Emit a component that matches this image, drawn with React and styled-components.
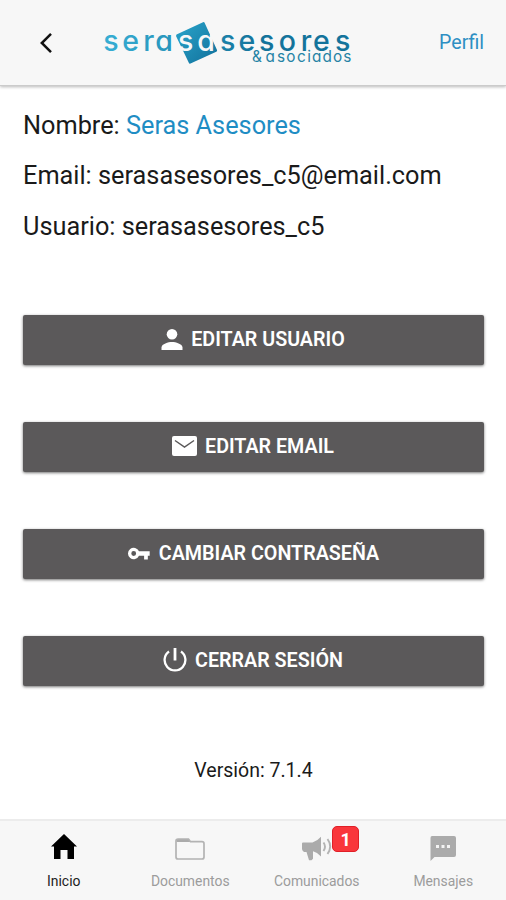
// External modules
import React from 'react';
import styled, { createGlobalStyle } from 'styled-components';

const GlobalStyle = createGlobalStyle`
  * {
    box-sizing: border-box;
  }

  body {
    margin: 0;
    font-family: Roboto, sans-serif;
    background-color: #fff;
    color: #1a1a1a;
  }
`;

const Screen = styled.div`
  width: 100%;
  height: 100vh;
  display: flex;
  flex-direction: column;
  overflow: hidden;
`;

const Header = styled.header`
  height: 86px;
  flex-shrink: 0;
  display: flex;
  align-items: flex-start;
  padding: 0 22px 0 36px;
  background-color: #f7f7f7;
  border-bottom: 1px solid #cbcbcb;
  box-shadow: 0 1px 3px rgba(0, 0, 0, 0.28);
`;

const BackButton = styled.button`
  width: 20px;
  height: 85px;
  padding: 3px 0 0;
  border: none;
  background: transparent;
`;

const Logo = styled.svg`
  width: 260px;
  height: 60px;
  margin: 14px auto 0 42px;
`;

const LogoText = styled.text`
  font-family: Inter, sans-serif;
  font-size: ${(props) => props.$size}px;
  font-weight: ${(props) => props.$weight || 400};
  font-feature-settings: 'cv11';
`;

const HeaderLink = styled.a`
  font-size: 19.6px;
  line-height: 85px;
  color: #2e8fc3;
`;

const Content = styled.main`
  flex: 1;
  padding: 15px 22px 0 23px;
`;

const Info = styled.p`
  margin: 0;
  height: 50.3px;
  line-height: 50px;
  font-size: 25.3px;
`;

const Name = styled.span`
  color: #1f8dc4;
`;

const Actions = styled.div`
  display: flex;
  flex-direction: column;
  gap: 57px;
  margin-top: 63px;
`;

const Action = styled.button`
  height: 50px;
  display: flex;
  justify-content: center;
  align-items: center;
  gap: 8px;
  padding: 0 1px 1px 0;
  border: none;
  border-radius: 2px;
  background-color: #5b595a;
  box-shadow: 0 1px 3px rgba(0, 0, 0, 0.55);
  color: #fff;
  font-family: Roboto, sans-serif;
  font-size: 19.7px;
  font-weight: 600;
  line-height: 49px;
`;

const Icon = styled.svg`
  width: ${(props) => props.$width}px;
  height: ${(props) => props.$height}px;
  flex-shrink: 0;
`;

const Version = styled.p`
  margin: 69px 0 0;
  text-align: center;
  font-size: 19.5px;
  line-height: 31px;
`;

const TabBar = styled.nav`
  height: 81px;
  flex-shrink: 0;
  display: grid;
  grid-template-columns: repeat(4, 1fr);
  background-color: #f7f7f7;
  border-top: 2px solid #ececec;
`;

const Tab = styled.a`
  display: flex;
  flex-direction: column;
  align-items: center;
  color: ${(props) => (props.$active ? '#222' : '#9c9c9c')};
  font-size: 13.9px;
`;

const TabIcon = styled.div`
  position: relative;
  width: 32px;
  height: 52px;
  display: flex;
  align-items: center;
  justify-content: center;
  padding: ${(props) => props.$drop || 0}px 0 ${(props) => props.$lift || 0}px 1px;
`;

const TabLabel = styled.span`
  padding-left: 1px;
  line-height: 17px;
`;

const Badge = styled.span`
  position: absolute;
  top: 5px;
  left: 32px;
  width: 27px;
  height: 26px;
  border: 1px solid #e01f27;
  border-radius: 5px;
  background-color: #f9363b;
  color: #fff;
  font-size: 18px;
  font-weight: 700;
  line-height: 25px;
  text-align: center;
`;

const BrandLogo = () => (
  <Logo viewBox="98 14 260 60">
    <defs>
      <linearGradient id="tile" x1="0" y1="0" x2="1" y2="1">
        <stop offset="0" stopColor="#2aa5cb" />
        <stop offset="1" stopColor="#11709b" />
      </linearGradient>
      <linearGradient id="brand" gradientUnits="userSpaceOnUse" x1="104" y1="0" x2="260" y2="0">
        <stop offset="0" stopColor="#37aed4" />
        <stop offset="1" stopColor="#14739b" />
      </linearGradient>
    </defs>
    <path d="M176.5 34.5 203 22.2q1.2-.5 1.700.7L217 50q.5 1.200-.7 1.700L190.500 63.500q-1.200.5-1.700-.7L176 36z" fill="url(#tile)" />
    <LogoText $size={28.5} $weight={500} y="51" x="103.2 122.3 143.2 155.3" fill="url(#brand)">sera</LogoText>
    <LogoText $size={28.5} $weight={500} y="51" x="178 197.3" fill="#f7f7f7">sa</LogoText>
    <LogoText $size={28.5} $weight={500} y="51" x="220 238.5 259 278.7 300.7 313 335" fill="url(#brand)">sesores</LogoText>
    <LogoText $size={15.3} y="62" x="252 265.6 277 286.2 297 307.2 312 322.5 333 343.3" fill="#2583a5">&amp;asociados</LogoText>
  </Logo>
);

const PersonIcon = () => (
  <Icon $width={22} $height={21} viewBox="0 0 22 21" fill="#fff">
    <circle cx="11" cy="5.3" r="5.3" />
    <path d="M.5 21v-2.600C.5 15 7.400 13 11 13s10.500 2 10.500 5.400V21z" />
  </Icon>
);

const MailIcon = () => (
  <Icon $width={25} $height={20} viewBox="0 0 25 20">
    <rect width="25" height="20" rx="2" fill="#fff" />
    <path d="M3 4.500l9.500 6.500L22 4.500" fill="none" stroke="#5b595a" strokeWidth="1.5" />
  </Icon>
);

const KeyIcon = () => (
  <Icon $width={24} $height={13} viewBox="0 0 24 14" fill="#fff">
    <path
      fillRule="evenodd"
      d="M12 4.500A6.200 6.200 0 1 0 12 9.500h5.500V13.500h4V9.500H23.500v-5zM6.300 4.400a2.600 2.600 0 1 1 0 5.200 2.600 2.600 0 0 1 0-5.200z"
    />
  </Icon>
);

const PowerIcon = () => (
  <Icon $width={24} $height={24} viewBox="0 0 24 24" fill="none" stroke="#fff" strokeWidth="2.3">
    <path d="M6 3.500a10.400 10.400 0 1 0 12 0" />
    <path d="M12 0v12.500" strokeWidth="2.8" />
  </Icon>
);

const HomeIcon = () => (
  <Icon $width={26} $height={25} viewBox="0 0 26 25" fill="#000">
    <path d="M13 0 26 12.500h-3V25h-6.500v-9h-7v9H3V12.500H0z" />
  </Icon>
);

const FolderIcon = () => (
  <Icon $width={30} $height={22} viewBox="0 0 30 22">
    <path d="M2.500 1h11l2.500 3H1.500V2z" fill="#ababab" />
    <path
      d="M3 1h10.500l2 2.700H27q2 0 2 2V19q0 2-2 2H3q-2 0-2-2V3q0-2 2-2z"
      fill="none"
      stroke="#b3b3b3"
      strokeWidth="1.7"
    />
  </Icon>
);

const MegaphoneIcon = () => (
  <Icon $width={30} $height={25} viewBox="0 0 30 25">
    <path d="M0 7.500q0-1 1-1h9.500Q15 5.300 19 .8v19.700q-4-4.200-8-5.200v7.500l-1.500 1.500H7L4.500 16H2q-2-1.500-2-3z" fill="#ababab" />
    <path d="M21.500 6.500q3 4.200 0 8.500M25.500 3q5.400 7.500 0 15" fill="none" stroke="#b3b3b3" strokeWidth="1.9" />
  </Icon>
);

const ChatIcon = () => (
  <Icon $width={26} $height={25} viewBox="0 0 26 25">
    <path d="M2 0h22q2 0 2 2v17q0 2-2 2H4.500L.5 25V2Q.5 0 2 0z" fill="#ababab" />
    <path d="M6 9h3v3H6zm5.500 0h3v3h-3zM17 9h3v3h-3z" fill="#f4f4f4" />
  </Icon>
);

const Profile = () => {
  return (
    <Screen>
      <GlobalStyle />
      <Header>
        <BackButton aria-label="Volver">
          <Icon $width={20} $height={22} viewBox="0 0 20 22">
            <path d="M15 1.800 5.800 11l9.200 9.200" fill="none" stroke="#111" strokeWidth="2.5" />
          </Icon>
        </BackButton>
        <BrandLogo />
        <HeaderLink>Perfil</HeaderLink>
      </Header>
      <Content>
        <Info>
          Nombre: <Name>Seras Asesores</Name>
        </Info>
        <Info>Email: serasasesores_c5@email.com</Info>
        <Info>Usuario: serasasesores_c5</Info>
        <Actions>
          <Action>
            <PersonIcon />
            EDITAR USUARIO
          </Action>
          <Action>
            <MailIcon />
            EDITAR EMAIL
          </Action>
          <Action>
            <KeyIcon />
            CAMBIAR CONTRASEÑA
          </Action>
          <Action>
            <PowerIcon />
            CERRAR SESIÓN
          </Action>
        </Actions>
        <Version>Versión: 7.1.4</Version>
      </Content>
      <TabBar>
        <Tab $active>
          <TabIcon $lift={2}>
            <HomeIcon />
          </TabIcon>
          <TabLabel>Inicio</TabLabel>
        </Tab>
        <Tab>
          <TabIcon $drop={3}>
            <FolderIcon />
          </TabIcon>
          <TabLabel>Documentos</TabLabel>
        </Tab>
        <Tab>
          <TabIcon $drop={2}>
            <MegaphoneIcon />
            <Badge>1</Badge>
          </TabIcon>
          <TabLabel>Comunicados</TabLabel>
        </Tab>
        <Tab>
          <TabIcon $drop={2}>
            <ChatIcon />
          </TabIcon>
          <TabLabel>Mensajes</TabLabel>
        </Tab>
      </TabBar>
    </Screen>
  );
};

export default Profile;
